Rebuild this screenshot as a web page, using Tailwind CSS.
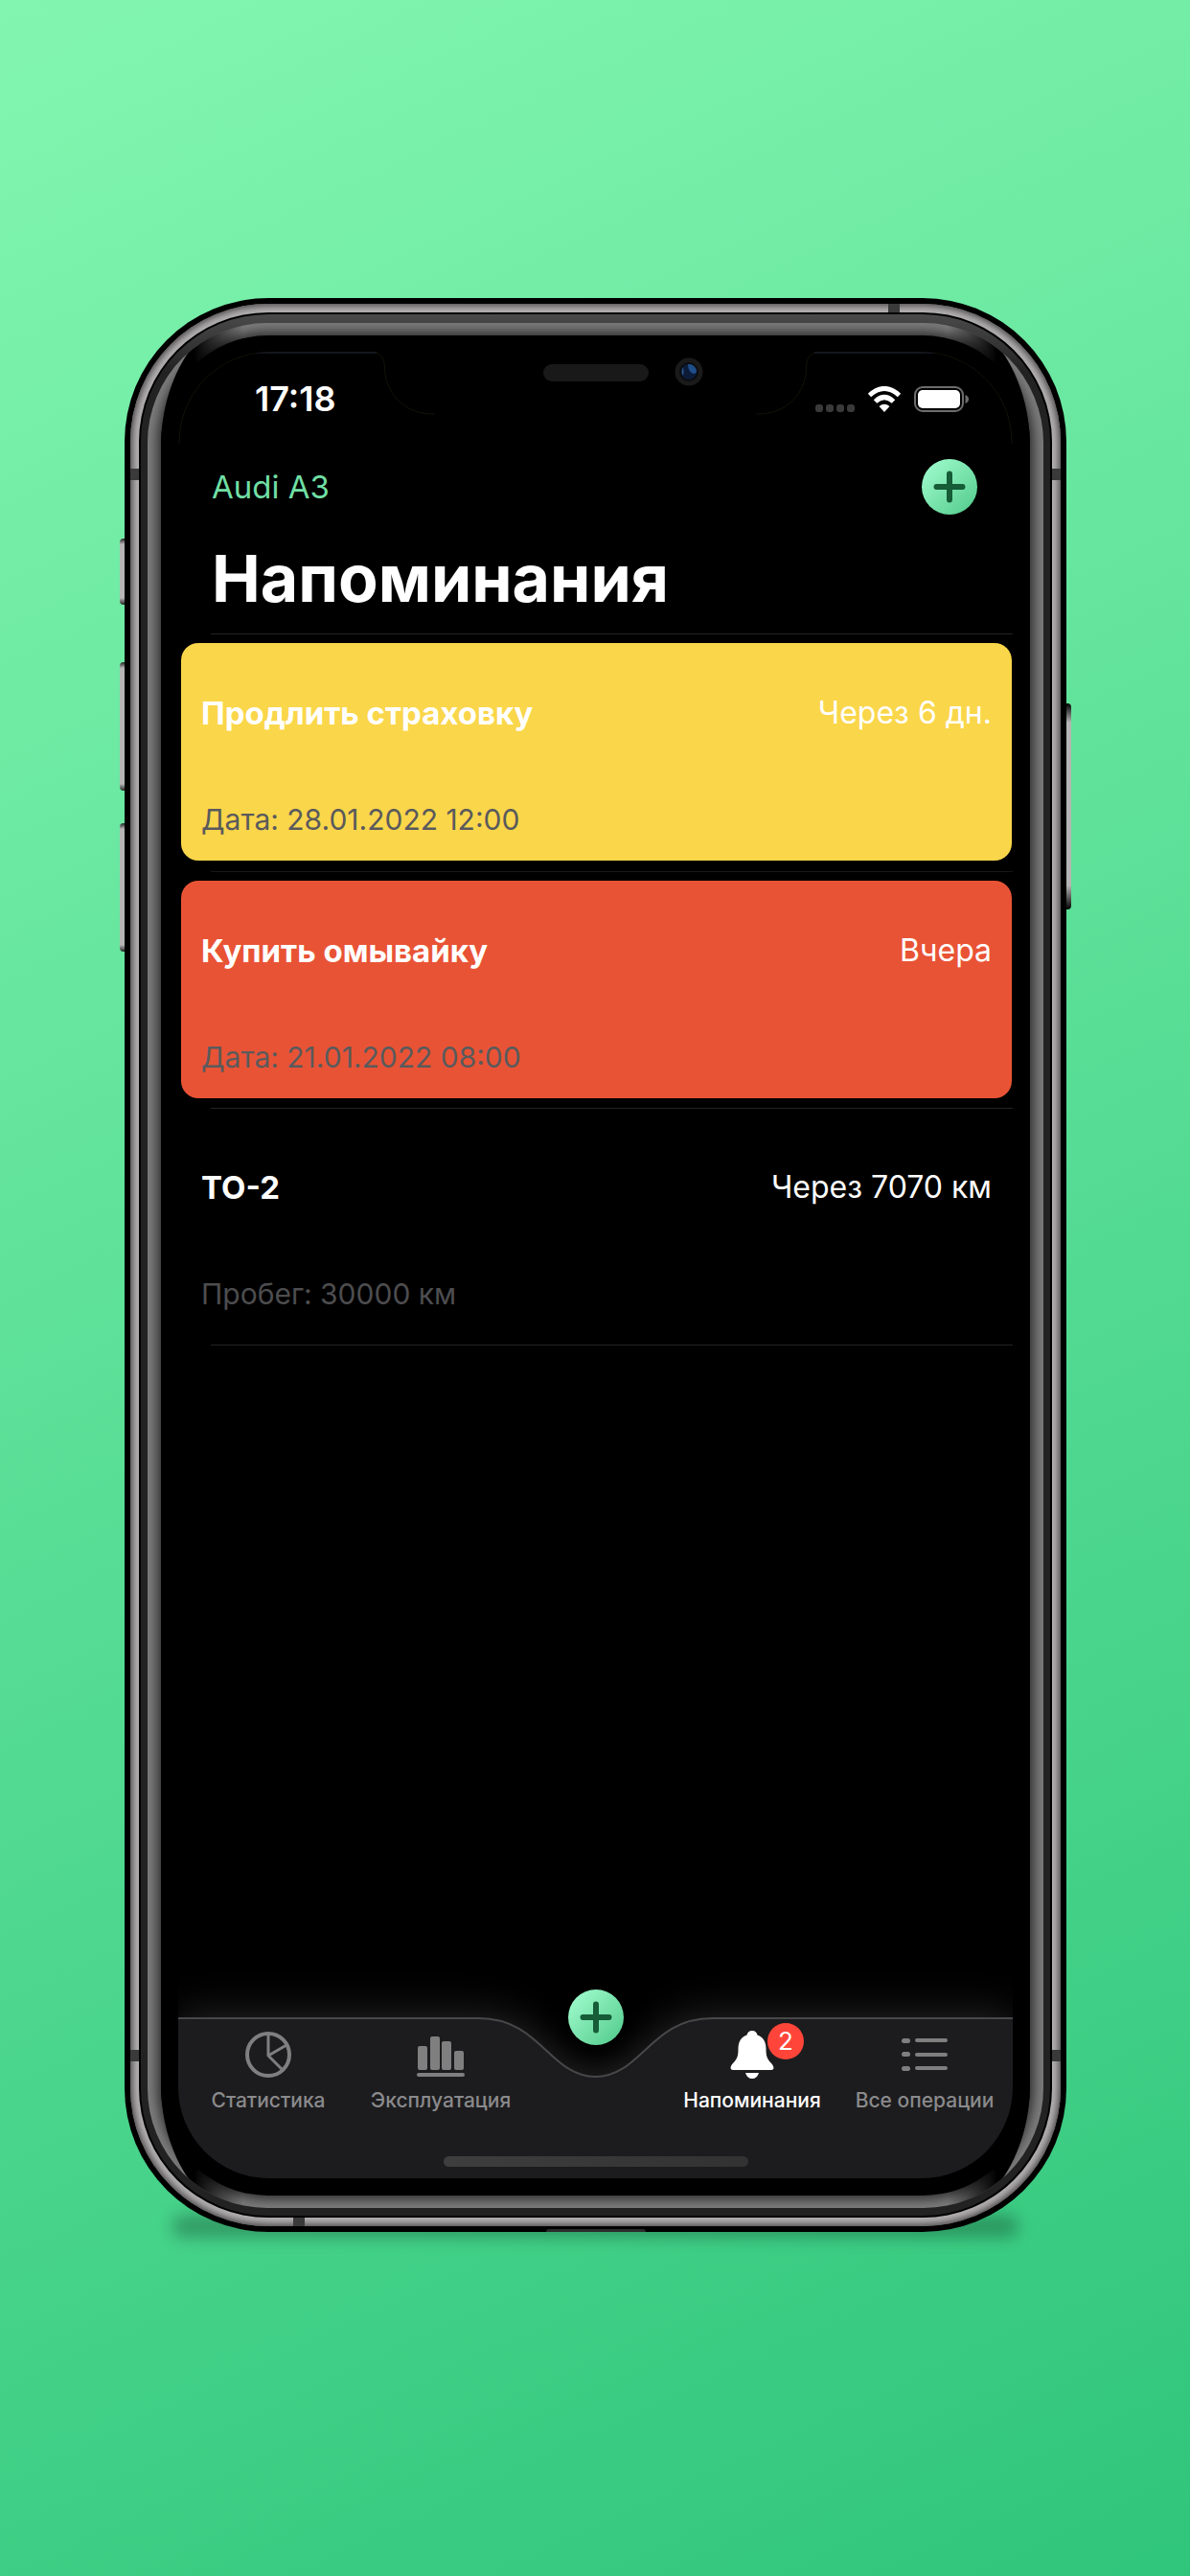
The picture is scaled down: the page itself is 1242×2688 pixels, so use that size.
<!DOCTYPE html>
<html lang="ru">
<head>
<meta charset="utf-8">
<meta name="viewport" content="width=device-width, initial-scale=1">
<title>Напоминания</title>
<script src="https://cdn.jsdelivr.net/npm/@tailwindcss/browser@4"></script>
</head>
<body class="flex min-h-screen flex-col bg-[linear-gradient(155deg,#82f6b0_0%,#2fc57b_100%)] pt-[311px] pr-[129px] pb-[359px] pl-[130px] font-['Inter','Liberation_Sans',sans-serif] text-white">

<svg class="absolute size-0" aria-hidden="true">
  <defs>
    <linearGradient id="fade" gradientUnits="userSpaceOnUse" x1="43" y1="0" x2="100" y2="0">
      <stop offset="0.1" stop-color="#000"/><stop offset="1" stop-color="#000" stop-opacity="0"/>
    </linearGradient>
    <symbol id="corner" viewBox="0 0 130 130">
      <path d="M14 130C14 92 24 58 43 30L80 70V130Z" fill="#000"/>
      <path d="M43 0H130V60H43Z" fill="url(#fade)"/>
    </symbol>
    <symbol id="plus" viewBox="0 0 58 58">
      <path d="M29 15.500V42.500M15.500 29H42.500" stroke="#155c37" stroke-width="6" stroke-linecap="round"/>
    </symbol>
  </defs>
</svg>

<div class="relative flex flex-1 flex-col">
  <!-- ground shadow and side keys -->
  <div class="absolute inset-x-[50px] -bottom-[6px] h-[24px] rounded-full bg-black/25 blur-[8px]"></div>
  <div class="absolute top-[251px] -left-[5px] h-[69px] w-[10px] rounded-l-[4px] bg-[linear-gradient(to_bottom,#222,#b5b5b5_6px,#b5b5b5_62px,#222)]"></div>
  <div class="absolute top-[380px] -left-[5px] h-[134px] w-[10px] rounded-l-[4px] bg-[linear-gradient(to_bottom,#222,#b5b5b5_6px,#b5b5b5_127px,#222)]"></div>
  <div class="absolute top-[548px] -left-[5px] h-[134px] w-[10px] rounded-l-[4px] bg-[linear-gradient(to_bottom,#222,#b5b5b5_6px,#b5b5b5_127px,#222)]"></div>
  <div class="absolute top-[423px] -right-[5px] h-[215px] w-[10px] rounded-r-[4px] bg-[linear-gradient(to_bottom,#000,#b5b5b5_20px,#b5b5b5_190px,#000)]"></div>

  <div class="relative flex flex-1 flex-col rounded-[150px] bg-black p-[6px]">
    <div class="absolute bottom-0 left-1/2 h-[3px] w-[104px] -translate-x-1/2 rounded-t-[3px] bg-[#2c2c2c]"></div>
    <div class="relative flex flex-1 flex-col rounded-[144px] bg-[#b2afb0] p-[9px] shadow-[inset_0_0_7px_2px_#444142]">
      <!-- antenna bands -->
      <div class="absolute top-[172px] left-0 h-[12px] w-[9px] bg-[#3a3a3a]"></div>
      <div class="absolute top-[172px] right-0 h-[12px] w-[9px] bg-[#3a3a3a]"></div>
      <div class="absolute bottom-[172px] left-0 h-[12px] w-[9px] bg-[#3a3a3a]"></div>
      <div class="absolute right-0 bottom-[172px] h-[12px] w-[9px] bg-[#3a3a3a]"></div>
      <div class="absolute top-0 right-[168px] h-[9px] w-[12px] bg-[#3a3a3a]"></div>
      <div class="absolute bottom-0 left-[170px] h-[9px] w-[12px] bg-[#3a3a3a]"></div>

      <div class="relative flex flex-1 flex-col rounded-[135px] bg-black p-[2px]">
        <div class="flex flex-1 flex-col rounded-[133px] bg-[linear-gradient(to_bottom,#4a4a4a,#222_60px)] px-[7px] pt-[9px] pb-[8px]">
          <div class="relative flex flex-1 flex-col overflow-hidden rounded-[125px] bg-[#7c7c7c] px-[14px] pt-[13px] pb-[13px]">
            <div class="flex flex-1 flex-col rounded-[112px] bg-black px-[18px] pt-[17px] pb-[18px] shadow-[0_0_12px_4px_#303030]">

              <svg class="absolute top-0 left-0 size-[130px]" aria-hidden="true"><use href="#corner"/></svg>
              <svg class="absolute top-0 right-0 size-[130px] -scale-x-100" aria-hidden="true"><use href="#corner"/></svg>
              <svg class="absolute bottom-0 left-0 size-[130px] -scale-y-100" aria-hidden="true"><use href="#corner"/></svg>
              <svg class="absolute right-0 bottom-0 size-[130px] -scale-100" aria-hidden="true"><use href="#corner"/></svg>

              <!-- screen -->
              <div class="relative flex flex-1 flex-col overflow-hidden rounded-[95px] bg-black">
                <!-- notch -->
                <svg class="absolute top-0 left-0 h-[100px] w-[280px]" fill="none" aria-hidden="true">
                  <path d="M1 96A94 94 0 0 1 84 1" stroke="#13130a"/>
                  <path d="M82 1H207" stroke="#14161d" stroke-width="2"/>
                  <path d="M207 1C216 5 215 12 216 24C220 48 240 66 268 65" stroke="#13130a"/>
                </svg>
                <svg class="absolute top-0 right-0 h-[100px] w-[280px] -scale-x-100" fill="none" aria-hidden="true">
                  <path d="M1 96A94 94 0 0 1 84 1" stroke="#13130a"/>
                  <path d="M82 1H207" stroke="#14161d" stroke-width="2"/>
                  <path d="M207 1C216 5 215 12 216 24C220 48 240 66 268 65" stroke="#13130a"/>
                </svg>
                <div class="absolute top-[13px] left-1/2 h-[18px] w-[110px] -translate-x-1/2 rounded-full bg-[#191919]"></div>
                <svg class="absolute top-[6px] left-1/2 ml-[82px] size-[30px]" viewBox="0 0 30 30" aria-hidden="true">
                  <circle cx="15" cy="15" r="14.500" fill="#1a1a1b"/>
                  <circle cx="15" cy="15" r="10" fill="#0c0d10"/>
                  <circle cx="15" cy="15" r="8" fill="#0c1b38"/>
                  <path d="M14 7A8 8 0 0 1 23 15Q22 17 20 17Q14 15 14 7Z" fill="#1f4f8a"/>
                  <path d="M9 10Q6 15 9 19Q10 15 9 10Z" fill="#2a5a90"/>
                </svg>

                <div class="flex h-[98px] items-center justify-between pr-[46px] pl-[80px]">
                  <time class="text-[36px] leading-[40px] font-semibold">17:18</time>
                  <div class="flex items-center gap-[13px]">
                    <svg class="h-[27px] w-[41px]" viewBox="0 0 41 27" fill="#3a3a3b" aria-hidden="true">
                      <rect y="19" width="8" height="8" rx="3"/><rect x="11" y="19" width="8" height="8" rx="3"/><rect x="22" y="19" width="8" height="8" rx="3"/><rect x="33" y="19" width="8" height="8" rx="3"/>
                    </svg>
                    <svg class="h-[27px] w-[36px]" viewBox="0 0 36 27" fill="none" stroke="#fff" aria-hidden="true">
                      <path d="M2.500 9.500Q18 -4.500 33.500 9.500" stroke-width="5"/>
                      <path d="M8.500 16Q18 7 27.500 16" stroke-width="5"/>
                      <path d="M18 27L12.500 21Q18 16.500 23.500 21Z" fill="#fff" stroke="none"/>
                    </svg>
                    <svg class="h-[27px] w-[57px]" viewBox="0 0 57 27" aria-hidden="true">
                      <rect x="1" y="1" width="50" height="25" rx="8" fill="none" stroke="#6d6d6d" stroke-width="2"/>
                      <rect x="4" y="4" width="44" height="19" rx="5" fill="#fff"/>
                      <path d="M53.500 9Q57 10.500 57 13.500Q57 16.500 53.500 18Z" fill="#6d6d6d"/>
                    </svg>
                  </div>
                </div>

                <header class="pt-[14px] pb-[18px]">
                  <div class="flex items-center justify-between pr-[37px] pl-[35px]">
                    <a href="#" class="text-[33px] leading-[40px] text-[#70dfa4]">Audi A3</a>
                    <button type="button" aria-label="Добавить напоминание" class="size-[58px] rounded-full bg-linear-to-br from-[#a4ffd2] to-[#4dc98a]"><svg class="size-full" aria-hidden="true"><use href="#plus"/></svg></button>
                  </div>
                  <h1 class="mt-[26px] pl-[35px] text-[68px] leading-[80px] font-bold">Напоминания</h1>
                </header>

                <main class="flex-1">
                  <ul class="flex flex-col">
                    <li>
                      <div class="ml-[34px] h-px bg-[#232324]"></div>
                      <article class="mt-[9px] mr-px mb-[11px] ml-[3px] flex flex-col gap-[73px] rounded-[18px] bg-[#fad64a] px-[21px] pt-[53px] pb-[25px]">
                        <div class="flex justify-between text-[32px] leading-[40px]"><h2 class="text-[33px] font-bold">Продлить страховку</h2><span>Через 6 дн.</span></div>
                        <p class="text-[30px] leading-[36px] text-[#5a5a5c]">Дата: 28.01.2022 12:00</p>
                      </article>
                    </li>
                    <li>
                      <div class="ml-[34px] h-px bg-[#18181a]"></div>
                      <article class="mt-[9px] mr-px mb-[10px] ml-[3px] flex flex-col gap-[73px] rounded-[18px] bg-[#e95335] px-[21px] pt-[53px] pb-[25px]">
                        <div class="flex justify-between text-[32px] leading-[40px]"><h2 class="text-[33px] font-bold">Купить омывайку</h2><span>Вчера</span></div>
                        <p class="text-[30px] leading-[36px] text-[#5a5a5c]">Дата: 21.01.2022 08:00</p>
                      </article>
                    </li>
                    <li>
                      <div class="ml-[34px] h-px bg-[#232324]"></div>
                      <article class="mt-[9px] mr-px mb-[10px] ml-[3px] flex flex-col gap-[73px] rounded-[18px] px-[21px] pt-[53px] pb-[25px]">
                        <div class="flex justify-between text-[32px] leading-[40px]"><h2 class="text-[33px] font-bold">ТО-2</h2><span>Через 7070 км</span></div>
                        <p class="text-[30px] leading-[36px] text-[#4d4d4f]">Пробег: 30000 км</p>
                      </article>
                      <div class="ml-[34px] h-px bg-[#232324]"></div>
                    </li>
                  </ul>
                </main>

                <nav class="relative h-[168px]">
                  <!-- bar with a dip under the round button -->
                  <div class="absolute inset-0 flex drop-shadow-[0_-4px_20px_rgba(255,255,255,0.14)]" aria-hidden="true">
                    <div class="flex-1 border-t-2 border-[#48484a] bg-[#1c1c1e]"></div>
                    <svg class="h-[168px] w-[243px]" viewBox="0 0 243 168" preserveAspectRatio="none">
                      <path d="M0 1C64 1 74 62 121.500 62S179 1 243 1V168H0Z" fill="#1c1c1e"/>
                      <path d="M0 1C64 1 74 62 121.500 62S179 1 243 1" fill="none" stroke="#48484a" stroke-width="2"/>
                    </svg>
                    <div class="flex-1 border-t-2 border-[#48484a] bg-[#1c1c1e]"></div>
                  </div>
                  <button type="button" aria-label="Добавить операцию" class="absolute -top-[29px] left-1/2 size-[58px] -translate-x-1/2 rounded-full bg-linear-to-br from-[#a4ffd2] to-[#4dc98a] shadow-[0_4px_22px_4px_#000]"><svg class="size-full" aria-hidden="true"><use href="#plus"/></svg></button>
                  <div class="relative grid grid-cols-[1fr_1fr_145px_1fr_1fr] pr-[2px] pl-[4px] pt-[14px] text-[21px] leading-[24px] font-medium whitespace-nowrap text-[#8a8a8c]">
                    <a href="#" class="flex flex-col items-center gap-[11px]">
                      <svg class="size-[50px]" viewBox="0 0 50 50" fill="none" stroke="#7f7f80" stroke-width="4" aria-hidden="true">
                        <circle cx="25" cy="25" r="22"/>
                        <path d="M25 3V26L40 41M25 26L44 15" stroke-width="3"/>
                      </svg>
                      Статистика
                    </a>
                    <a href="#" class="flex flex-col items-center gap-[11px]">
                      <svg class="size-[50px]" viewBox="0 0 50 50" fill="#7f7f80" aria-hidden="true">
                        <rect x="1" y="16" width="10" height="25" rx="2"/><rect x="14" y="6" width="10" height="35" rx="2"/><rect x="26" y="11" width="10" height="30" rx="2"/><rect x="39" y="21" width="10" height="20" rx="2"/><rect y="44" width="50" height="4" rx="2"/>
                      </svg>
                      Эксплуатация
                    </a>
                    <a href="#" aria-current="page" class="col-start-4 flex flex-col items-center gap-[11px] text-white">
                      <span class="relative">
                        <svg class="size-[50px]" viewBox="0 0 50 50" fill="#fff" aria-hidden="true">
                          <path d="M25 0C22 0 20 2 19.500 4.500C13 7 10.500 12 10.500 19C10.500 27 9 30 5 34C2 37 1.500 41 5 41H45C48.500 41 48 37 45 34C41 30 39.500 27 39.500 19C39.500 12 37 7 30.500 4.500C30 2 28 0 25 0Z"/>
                          <path d="M18 44H32Q30 50 25 50T18 44Z"/>
                        </svg>
                        <span class="absolute -top-[8px] left-[41px] flex size-[38px] items-center justify-center rounded-full bg-[#ff453a] text-[26px] leading-[38px] font-normal">2</span>
                      </span>
                      Напоминания
                    </a>
                    <a href="#" class="flex flex-col items-center gap-[11px]">
                      <svg class="size-[50px]" viewBox="0 0 50 50" fill="#7f7f80" aria-hidden="true">
                        <rect x="1" y="8" width="9" height="5" rx="2.500"/><rect x="15" y="8" width="34" height="4" rx="2"/>
                        <rect x="1" y="22" width="9" height="5" rx="2.500"/><rect x="15" y="23" width="34" height="4" rx="2"/>
                        <rect x="1" y="37" width="9" height="5" rx="2.500"/><rect x="15" y="37" width="34" height="4" rx="2"/>
                      </svg>
                      Все операции
                    </a>
                  </div>
                  <div class="absolute bottom-[12px] left-1/2 h-[11px] w-[318px] -translate-x-1/2 rounded-full bg-linear-to-r from-[#3e3e3f] to-[#323233]"></div>
                </nav>
              </div>
            </div>
          </div>
        </div>
      </div>
    </div>
  </div>
</div>
</body>
</html>
